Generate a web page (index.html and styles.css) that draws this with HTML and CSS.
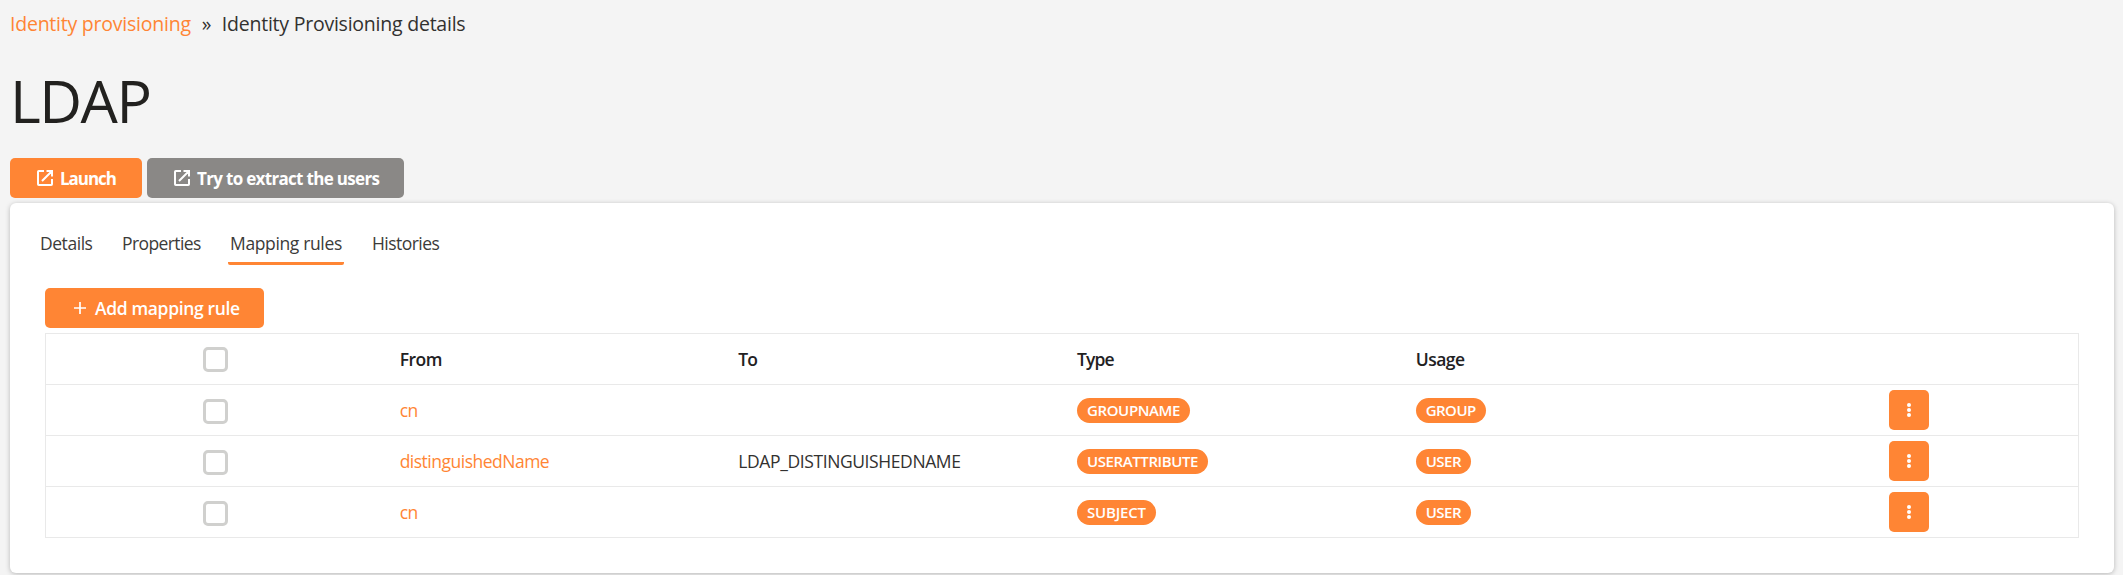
FILE: index.html
```html
<!DOCTYPE html>
<html lang="en">
<head>
<meta charset="utf-8">
<title>LDAP</title>
<link rel="stylesheet" href="styles.css">
</head>
<body>
<nav class="crumbs"><a class="crumb-link">Identity provisioning</a><span class="crumb-sep">»</span><span>Identity Provisioning details</span></nav>
<h1 class="title">LDAP</h1>
<div class="actions">
  <button class="btn launch"><svg class="icon" viewBox="0 0 16 16"><path d="M7 1H1.8Q1 1 1 1.8V14.2Q1 15 1.8 15H14.2Q15 15 15 14.2V9M9.5 1H15V6.5M14.8 1.2L5 11"/></svg><span>Launch</span></button>
  <button class="btn extract"><svg class="icon" viewBox="0 0 16 16"><path d="M7 1H1.8Q1 1 1 1.8V14.2Q1 15 1.8 15H14.2Q15 15 15 14.2V9M9.5 1H15V6.5M14.8 1.2L5 11"/></svg><span>Try to extract the users</span></button>
</div>
<main class="card">
  <div class="tabs">
    <a class="tab t-details">Details</a><a class="tab t-properties">Properties</a><a class="tab t-rules active">Mapping rules</a><a class="tab t-histories">Histories</a>
  </div>
  <button class="btn add"><svg class="plus" viewBox="0 0 12 12"><path d="M6 0V12M0 6H12"/></svg><span>Add mapping rule</span></button>
  <div class="table">
    <div class="row head"><div class="check"><i class="box"></i></div><div>From</div><div class="tight">To</div><div class="tight">Type</div><div>Usage</div><div></div></div>
    <div class="row"><div class="check"><i class="box"></i></div><div><a class="link">cn</a></div><div></div><div><span class="pill">GROUPNAME</span></div><div><span class="pill p-group">GROUP</span></div><div class="menu"><button class="more"><svg viewBox="0 0 4 14"><circle cx="2" cy="2" r="2"/><circle cx="2" cy="7" r="2"/><circle cx="2" cy="12" r="2"/></svg></button></div></div>
    <div class="row"><div class="check"><i class="box"></i></div><div><a class="link">distinguishedName</a></div><div class="target">LDAP_DISTINGUISHEDNAME</div><div><span class="pill p-attr">USERATTRIBUTE</span></div><div><span class="pill p-user">USER</span></div><div class="menu"><button class="more"><svg viewBox="0 0 4 14"><circle cx="2" cy="2" r="2"/><circle cx="2" cy="7" r="2"/><circle cx="2" cy="12" r="2"/></svg></button></div></div>
    <div class="row"><div class="check"><i class="box"></i></div><div><a class="link">cn</a></div><div></div><div><span class="pill p-subject">SUBJECT</span></div><div><span class="pill p-user">USER</span></div><div class="menu"><button class="more"><svg viewBox="0 0 4 14"><circle cx="2" cy="2" r="2"/><circle cx="2" cy="7" r="2"/><circle cx="2" cy="12" r="2"/></svg></button></div></div>
  </div>
</main>
</body>
</html>
```
FILE: styles.css
```css
* { box-sizing: border-box; }
body {
  margin: 0;
  padding: 0 9px 0 10px;
  height: 575px;
  overflow: hidden;
  background: #f4f4f4;
  color: #32312f;
  font-family: "Open Sans", "Noto Sans", sans-serif;
  font-size: 17.5px;
}
.crumbs {
  display: flex;
  height: 47px;
  line-height: 47px;
  font-size: 19.5px;
  letter-spacing: -0.23px;
}
.crumb-link, .link { color: #ff8534; }
.crumb-sep { width: 31px; padding-left: 11px; }
.title {
  margin: 0;
  padding: 23px 0 28px;
  height: 111px;
  line-height: 60px;
  font-size: 59px;
  font-weight: 400;
  letter-spacing: -1.5px;
  color: #22211f;
}
.actions { display: flex; gap: 5px; height: 45px; }
.btn {
  display: flex;
  align-items: center;
  height: 40px;
  padding: 0 0 0 27px;
  border: 0;
  border-radius: 5px;
  background: #ff8534;
  color: #fff;
  font: 600 17.5px "Open Sans", sans-serif;
  white-space: nowrap;
}
.icon, .plus { fill: none; stroke: #fff; stroke-width: 2; flex: none; }
.icon { width: 16px; height: 16px; margin-right: 7px; }
.launch, .extract { font-weight: 700; font-size: 17px; }
.launch { width: 132px; letter-spacing: -1.05px; }
.extract { width: 257px; background: #8a8886; letter-spacing: -0.68px; }
.add { width: 219px; padding-left: 29px; letter-spacing: -0.36px; }
.plus { width: 12px; height: 12px; margin-right: 9px; stroke-width: 1.7; }
.card {
  height: 370px;
  padding: 20px 35px 0;
  border-radius: 6px;
  background: #fff;
  box-shadow: 0 1px 5px rgba(0, 0, 0, 0.25);
}
.tabs { display: flex; gap: 26px; height: 65px; padding-left: 3px; margin-left: -10px; }
.tab {
  height: 42px;
  line-height: 40px;
  padding-left: 2px;
  border-bottom: 3px solid transparent;
  border-radius: 2px;
  color: #3c3b39;
  white-space: nowrap;
}
.t-details { width: 56px; letter-spacing: -0.45px; }
.t-properties { width: 82px; letter-spacing: -0.6px; }
.t-rules { width: 116px; letter-spacing: -0.36px; }
.t-histories { letter-spacing: -0.55px; }
.active { border-color: #ff8534; }
.table { width: 2034px; margin-top: 5px; border: 1px solid #e9e9e9; border-bottom: 0; }
.row {
  display: grid;
  grid-template-columns: repeat(6, 1fr);
  height: 51px;
  line-height: 50px;
  border-bottom: 1px solid #e9e9e9;
}
.row > div { padding-left: 15px; display: flex; align-items: center; min-width: 0; }
.row > .check, .row > .menu { justify-content: center; padding: 0; }
.head { font-weight: 600; color: #22211f; letter-spacing: -0.5px; }
.head .tight { letter-spacing: -0.9px; }
.link { letter-spacing: -0.5px; }
.target { letter-spacing: -0.4px; }
.box { width: 25px; height: 25px; border: 3px solid #d0d0ce; border-radius: 5px; margin-top: 3px; }
.head .box { margin-top: 0; }
.pill {
  height: 25px;
  line-height: 24px;
  padding: 0 10px;
  border-radius: 12.5px;
  background: #ff8534;
  color: #fff;
  font-size: 15px;
  font-weight: 600;
  letter-spacing: -0.38px;
}
.p-attr { letter-spacing: -0.4px; }
.p-subject { letter-spacing: -0.2px; }
.p-group { letter-spacing: -0.5px; }
.p-user { letter-spacing: -0.5px; }
.more {
  display: flex;
  align-items: center;
  justify-content: center;
  width: 40px;
  height: 40px;
  padding: 0;
  border: 0;
  border-radius: 5px;
  background: #ff8534;
}
.more svg { width: 4px; height: 14px; fill: #fff; }
```
